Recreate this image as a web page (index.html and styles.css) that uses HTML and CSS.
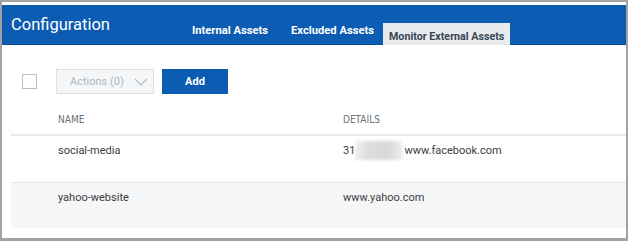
FILE: index.html
```html
<!DOCTYPE html>
<html>
<head>
<meta charset="utf-8">
<link rel="stylesheet" href="styles.css">
</head>
<body>
<div class="frame">
  <header class="topbar">
    <div class="title">Configuration</div>
    <nav class="tabs">
      <span class="tab">Internal Assets</span>
      <span class="tab">Excluded Assets</span>
      <span class="tab active">Monitor External Assets</span>
    </nav>
  </header>
  <section class="content">
    <div class="toolbar">
      <span class="checkbox"></span>
      <span class="actions">Actions (0)
        <svg class="chev" width="14" height="8" viewBox="0 0 14 8"><path d="M1 1 L7 7 L13 1" fill="none" stroke="#b4bcc6" stroke-width="1.2"/></svg>
      </span>
      <span class="add">Add</span>
    </div>
    <div class="table">
      <div class="row head">
        <div class="c1">NAME</div>
        <div class="c2">DETAILS</div>
      </div>
      <div class="row">
        <div class="c1">social-media</div>
        <div class="c2">31<span class="blur"></span>www.facebook.com</div>
      </div>
      <div class="row alt">
        <div class="c1">yahoo-website</div>
        <div class="c2">www.yahoo.com</div>
      </div>
    </div>
  </section>
</div>
</body>
</html>
```
FILE: styles.css
```css
* { box-sizing: border-box; }
html, body { margin: 0; padding: 0; background: #fff; }
body { font-family: Roboto, "Liberation Sans", sans-serif; }
.frame {
  width: 628px;
  height: 241px;
  border: 2px solid #a2a2a2;
  border-bottom-width: 3px;
  padding-top: 3px;
  background: #fff;
  display: flex;
  flex-direction: column;
}
.topbar {
  height: 40px;
  background: #0b5cb2;
  border-bottom: 1px solid #0a4a8e;
  display: flex;
  align-items: flex-start;
}
.title {
  width: 190px;
  padding-left: 9px;
  padding-top: 10px;
  color: #fff;
  font-size: 16.5px;
  line-height: 20px;
}
.tabs {
  display: flex;
  align-items: flex-start;
  height: 100%;
}
.tab {
  color: #fff;
  font-weight: bold;
  font-size: 11.2px;
  line-height: 13px;
  padding-top: 19px;
  margin-right: 23px;
}
.tab:nth-child(2) { margin-right: 9px; }
.tab.active {
  margin-top: 18px;
  height: 22px;
  padding: 7px 6px 0 6px;
  background: #e7ebee;
  color: #3a4656;
  font-size: 10.7px;
  margin-right: 0;
}
.content { padding: 0 0 0 9px; flex: 1; }
.toolbar {
  display: flex;
  align-items: center;
  height: 25px;
  margin-top: 24px;
}
.checkbox {
  width: 15px;
  height: 15px;
  border: 1px solid #b9bec4;
  background: #fff;
  margin-left: 11px;
  margin-right: 19px;
}
.actions {
  width: 98px;
  height: 25px;
  background: #f4f6f8;
  border: 1px solid #dde1e5;
  color: #b0b7bf;
  font-size: 11px;
  display: flex;
  align-items: center;
  padding-left: 13px;
  gap: 10px;
}
.add {
  margin-left: 8px;
  width: 66px;
  height: 25px;
  background: #0b5cb2;
  color: #fff;
  font-size: 11px;
  font-weight: bold;
  display: flex;
  align-items: center;
  justify-content: center;
}
.table { margin-top: 15px; }
.row {
  display: flex;
  height: 47px;
  border-top: 1px solid #e6e8ea;
  font-size: 11px;
  color: #3c3c3c;
  padding-top: 8px;
}
.row.head {
  height: 26px;
  border-top: none;
  border-bottom: 1px solid #e6e8ea;
  padding-top: 5px;
  font-family: "DejaVu Sans Condensed", "DejaVu Sans", sans-serif;
  font-stretch: condensed;
  font-size: 10px;
  color: #6c7278;
}
.row.alt { background: #f5f6f8; height: 46px; }
.c1 { width: 332px; padding-left: 47px; }
.c2 { flex: 1; display: flex; align-items: flex-start; }
.blur {
  display: inline-block;
  width: 47px;
  height: 19px;
  margin: -3px 2px 0 0;
  background: linear-gradient(90deg, #f0f0f0, #dcdcdc 30%, #d8d8d8 70%, #ececec);
  filter: blur(1.5px);
}
```
